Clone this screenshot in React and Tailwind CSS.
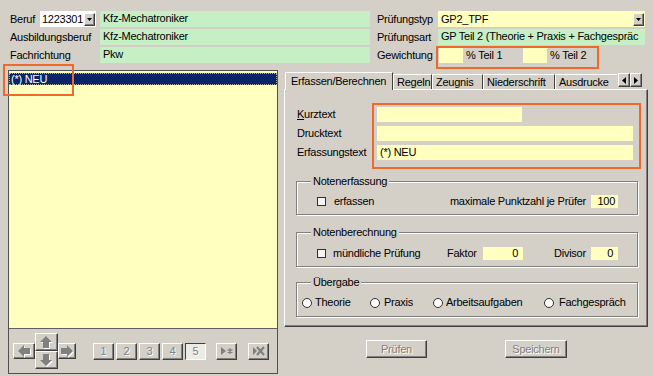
import React from "react";

const raised =
  "border border-t-white border-l-white border-r-[#404040] border-b-[#404040] shadow-[inset_-1px_-1px_0_#808080] bg-[#d4d0c8]";
const yellow = "bg-[#ffffc0]";
const green = "bg-[#c6efc6]";
const disabledText = "text-[#808080] [text-shadow:1px_1px_0_#fff]";

const DropBtn = () => (
  <div className={`${raised} w-[11px] h-[13px] flex items-center justify-center mr-[1px] shrink-0`}>
    <svg width="5" height="3" viewBox="0 0 5 3">
      <polygon points="0,0 5,0 2.5,3" fill="#000" />
    </svg>
  </div>
);

const Arrow = ({ dir }) => {
  const pts = {
    left: "1,6 7,0 7,3 13,3 13,9 7,9 7,12",
    right: "13,6 7,0 7,3 1,3 1,9 7,9 7,12",
    up: "6,0 12,6 9,6 9,12 3,12 3,6 0,6",
    down: "6,12 12,6 9,6 9,0 3,0 3,6 0,6",
  }[dir];
  return (
    <svg width="14" height="13" viewBox="0 0 14 13">
      <polygon points={pts} fill="#fff" transform="translate(1,1)" />
      <polygon points={pts} fill="#808080" />
    </svg>
  );
};

const Check = () => (
  <div className="w-[9px] h-[9px] border border-[#303030] bg-[#f4f4f4] shrink-0" />
);

const Radio = () => (
  <div className="w-[10px] h-[10px] rounded-full border border-[#303030] bg-white shrink-0" />
);

const Group = ({ title, className = "", children }) => (
  <fieldset
    className={`border border-[#808080] shadow-[inset_1px_1px_0_#fff,1px_1px_0_#fff] mx-[11px] w-[342px] ${className}`}
  >
    <legend className="ml-[14px] px-[2px] leading-[13px] bg-[#d4d0c8] relative">{title}</legend>
    {children}
  </fieldset>
);

export default function App() {
  return (
    <div className="relative w-[653px] h-[376px] overflow-hidden bg-[#d4d0c8] text-black text-[11px] tracking-[-0.25px] leading-[15px] font-['Liberation_Sans',Arial,sans-serif]">
      {/* Header fields */}
      <div className="flex flex-col gap-y-[2px] pt-[11px] pl-[10px] whitespace-nowrap">
        <div className="flex h-[16px] items-center">
          <span className="w-[30px]">Beruf</span>
          <div className="flex h-[16px] w-[56px] bg-white items-center overflow-hidden">
            <span className="flex-1 pl-[2px]">1223301</span>
            <DropBtn />
          </div>
          <div className={`ml-[4px] w-[270px] h-[16px] ${green} pl-[3px]`}>Kfz-Mechatroniker</div>
          <span className="ml-[7px] w-[61px]">Prüfungstyp</span>
          <div className={`w-[207px] h-[16px] ${yellow} flex items-center`}>
            <span className="flex-1 pl-[3px]">GP2_TPF</span>
            <DropBtn />
          </div>
        </div>
        <div className="flex h-[16px] items-center">
          <span className="w-[90px]">Ausbildungsberuf</span>
          <div className={`w-[270px] h-[16px] ${green} pl-[3px]`}>Kfz-Mechatroniker</div>
          <span className="ml-[7px] w-[61px]">Prüfungsart</span>
          <div className={`w-[207px] h-[16px] ${green} pl-[3px] overflow-hidden`}>
            GP Teil 2 (Theorie + Praxis + Fachgespräc
          </div>
        </div>
        <div className="flex h-[16px] items-center">
          <span className="w-[90px]">Fachrichtung</span>
          <div className={`w-[270px] h-[16px] ${green} pl-[3px]`}>Pkw</div>
          <span className="ml-[7px] w-[62px]">Gewichtung</span>
          <div className={`w-[24px] h-[15px] ${yellow}`} />
          <span className="w-[60px] pl-[3px]">% Teil 1</span>
          <div className={`w-[24px] h-[15px] ${yellow}`} />
          <span className="w-[48px] pl-[3px]">% Teil 2</span>
        </div>
      </div>

      {/* Main area */}
      <div className="flex mt-[7px]">
        {/* Left list panel */}
        <div className="ml-[8px] w-[270px] h-[304px] border border-[#505050] flex flex-col">
          <div className={`h-[258px] ${yellow} border-b border-[#606060] pt-[2px]`}>
            <div className="h-[12px] bg-[#0a246a] text-white leading-[11px] pl-[1px] border border-dotted border-[#b0b0a0]">
              (*) NEU
            </div>
          </div>
          <div className="flex-1 flex items-center pl-[4px]">
            <div className="flex items-center">
              <div className={`${raised} w-[22px] h-[16px] flex items-center justify-center`}>
                <Arrow dir="left" />
              </div>
              <div className="flex flex-col">
                <div className={`${raised} w-[23px] h-[18px] flex items-center justify-center`}>
                  <Arrow dir="up" />
                </div>
                <div className={`${raised} w-[23px] h-[18px] flex items-center justify-center`}>
                  <Arrow dir="down" />
                </div>
              </div>
              <div className={`${raised} w-[18px] h-[16px] flex items-center justify-center`}>
                <Arrow dir="right" />
              </div>
            </div>
            <div className="flex gap-[2px] ml-[17px]">
              {["1", "2", "3", "4"].map((n) => (
                <div key={n} className={`${raised} w-[21px] h-[17px] flex items-center justify-center ${disabledText}`}>
                  {n}
                </div>
              ))}
              <div className={`w-[21px] h-[17px] flex items-center justify-center border border-t-[#404040] border-l-[#404040] border-r-white border-b-white bg-[#ecebe6] ${disabledText}`}>
                5
              </div>
            </div>
            <div className={`${raised} ml-[10px] w-[21px] h-[17px] flex items-center justify-center`}>
              <svg width="14" height="10" viewBox="0 0 14 10">
                <polygon points="1,1 6,5 1,9" fill="#808080" />
                <path d="M10 2 V8 M7.5 3.5 L12.5 6.5 M12.5 3.5 L7.5 6.5" stroke="#808080" strokeWidth="1.3" />
              </svg>
            </div>
            <div className={`${raised} ml-[11px] w-[21px] h-[17px] flex items-center justify-center`}>
              <svg width="14" height="10" viewBox="0 0 14 10">
                <polygon points="1,1 5,5 1,9" fill="#808080" />
                <path d="M5 1 L12 9 M12 1 L5 9" stroke="#808080" strokeWidth="2.2" />
              </svg>
            </div>
          </div>
        </div>

        {/* Right tab area */}
        <div className="ml-[6px] w-[364px] flex flex-col">
          <div className="flex items-end h-[19px] pl-[1px] whitespace-nowrap">
            <div className="relative z-10 -mb-[1px] h-[18px] w-[108px] pl-[5px] bg-[#d4d0c8] border-t border-l border-white border-r border-r-[#404040] leading-[16px]">
              Erfassen/Berechnen
            </div>
            <div className="h-[15px] w-[39px] pl-[3px] border-t border-l border-white border-r border-r-[#404040] leading-[14px]">Regeln</div>
            <div className="h-[15px] w-[51px] pl-[3px] border-t border-l border-white border-r border-r-[#404040] leading-[14px]">Zeugnis</div>
            <div className="h-[15px] w-[72px] pl-[3px] border-t border-l border-white border-r border-r-[#404040] leading-[14px]">Niederschrift</div>
            <div className="h-[15px] w-[62px] pl-[3px] border-t border-l border-white leading-[14px] overflow-hidden">Ausdrucke</div>
            <div className="flex self-start mt-[3px] ml-[1px]">
              <div className={`${raised} w-[12px] h-[14px] flex items-center justify-center`}>
                <svg width="4" height="7" viewBox="0 0 4 7"><polygon points="4,0 0,3.5 4,7" fill="#000" /></svg>
              </div>
              <div className={`${raised} w-[12px] h-[14px] flex items-center justify-center`}>
                <svg width="4" height="7" viewBox="0 0 4 7"><polygon points="0,0 4,3.5 0,7" fill="#000" /></svg>
              </div>
            </div>
          </div>
          <div className="h-[238px] border border-t-white border-l-white border-r-[#404040] border-b-[#404040] shadow-[inset_-1px_-1px_0_#808080] whitespace-nowrap">
            <div className="flex flex-col gap-[4px] pt-[17px] pl-[12px]">
              <div className="flex items-center h-[15px]">
                <span className="w-[80px]"><span className="underline">K</span>urztext</span>
                <div className={`w-[145px] h-[15px] ${yellow}`} />
              </div>
              <div className="flex items-center h-[15px]">
                <span className="w-[80px]">Drucktext</span>
                <div className={`w-[256px] h-[15px] ${yellow}`} />
              </div>
              <div className="flex items-center h-[15px]">
                <span className="w-[80px]">Erfassungstext</span>
                <div className={`w-[256px] h-[15px] ${yellow} pl-[3px]`}>(*) NEU</div>
              </div>
            </div>

            <Group title="Notenerfassung" className="mt-[15px] h-[40px]">
              <div className="flex items-center h-[13px] mt-[7px] pl-[20px] pr-[19px]">
                <Check />
                <span className="ml-[8px]">erfassen</span>
                <span className="ml-auto">maximale Punktzahl je Prüfer</span>
                <div className={`ml-[5px] w-[27px] h-[13px] ${yellow} text-right pr-[3px] leading-[13px]`}>100</div>
              </div>
            </Group>

            <Group title="Notenberechnung" className="mt-[11px] h-[41px]">
              <div className="flex items-center h-[13px] mt-[8px] pl-[20px]">
                <Check />
                <span className="ml-[7px] w-[114px]">mündliche Prüfung</span>
                <span className="w-[36px]">Faktor</span>
                <div className={`w-[40px] h-[13px] ${yellow} text-right pr-[5px] leading-[13px]`}>0</div>
                <span className="ml-[31px] w-[37px]">Divisor</span>
                <div className={`w-[27px] h-[13px] ${yellow} text-right pr-[5px] leading-[13px]`}>0</div>
              </div>
            </Group>

            <Group title="Übergabe" className="mt-[9px] h-[41px]">
              <div className="flex items-center h-[13px] mt-[7px] pl-[5px]">
                <div className="flex items-center gap-[3px] w-[68px]"><Radio />Theorie</div>
                <div className="flex items-center gap-[4px] w-[63px]"><Radio />Praxis</div>
                <div className="flex items-center gap-[3px] w-[111px]"><Radio />Arbeitsaufgaben</div>
                <div className="flex items-center gap-[5px]"><Radio />Fachgespräch</div>
              </div>
            </Group>
          </div>

          <div className="flex mt-[13px] ml-[82px] gap-[78px]">
            <div className={`${raised} w-[61px] h-[18px] flex items-center justify-center ${disabledText}`}>Prüfen</div>
            <div className={`${raised} w-[62px] h-[18px] flex items-center justify-center ${disabledText}`}>Speichern</div>
          </div>
        </div>
      </div>

      {/* Annotation overlays */}
      <div className="absolute left-[3px] top-[64px] w-[71px] h-[32px] border-2 border-[#ee6a2c] pointer-events-none" />
      <div className="absolute left-[436px] top-[46px] w-[163px] h-[23px] border-2 border-[#ee6a2c] pointer-events-none" />
      <div className="absolute left-[372px] top-[103px] w-[269px] h-[66px] border-2 border-[#ee6a2c] pointer-events-none" />
    </div>
  );
}
